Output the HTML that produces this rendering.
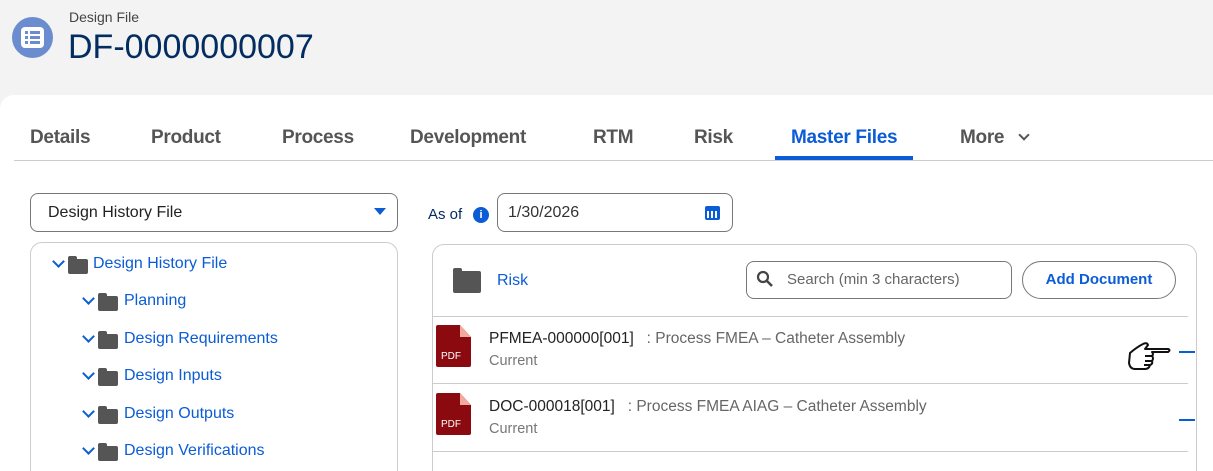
<!DOCTYPE html>
<html style="overflow:hidden;height:471px"><head><meta charset="utf-8"><style>
*{box-sizing:border-box;margin:0;padding:0}
body{width:1213px;height:471px;overflow:hidden;background:#f3f3f3;font-family:"Liberation Sans",sans-serif;position:relative}
.a{position:absolute;white-space:nowrap}
.card{position:absolute;left:0;top:95px;width:1240px;height:376px;background:#fff;border-radius:14px 0 0 0}
.tab{position:absolute;top:127px;font-size:19px;color:#555;font-weight:bold;letter-spacing:-0.3px}
.ti{position:absolute;font-size:16px;color:#0b5cd5}
.chev{position:absolute;width:9px;height:9px;border-right:2px solid #0b5cd5;border-bottom:2px solid #0b5cd5;transform:rotate(45deg)}
.fold{position:absolute;width:20px;height:15px;background:#555;border-radius:2px}
.fold:before{content:"";position:absolute;left:0;top:-3px;width:9px;height:4px;background:#555;border-radius:2px 2px 0 0}
</style></head><body>
<div class="a" style="left:12px;top:17px;width:41px;height:41px;border-radius:50%;background:#6b8ccf"></div>
<div class="a" style="left:21px;top:27px;width:23px;height:21px;border-radius:4px;background:#fff"></div>
<div class="a" style="left:25px;top:31px;width:3px;height:3px;background:#6b8ccf"></div><div class="a" style="left:30px;top:31px;width:10px;height:3px;background:#6b8ccf"></div>
<div class="a" style="left:25px;top:36px;width:3px;height:3px;background:#6b8ccf"></div><div class="a" style="left:30px;top:36px;width:10px;height:3px;background:#6b8ccf"></div>
<div class="a" style="left:25px;top:41px;width:3px;height:3px;background:#6b8ccf"></div><div class="a" style="left:30px;top:41px;width:10px;height:3px;background:#6b8ccf"></div>
<div class="a" style="left:69px;top:9px;font-size:14px;color:#444">Design File</div>
<div class="a" style="left:68px;top:28px;font-size:34px;color:#032d60">DF-0000000007</div>
<div class="card"></div>
<div class="tab" style="left:30px">Details</div>
<div class="tab" style="left:151px">Product</div>
<div class="tab" style="left:282px">Process</div>
<div class="tab" style="left:410px">Development</div>
<div class="tab" style="left:593px">RTM</div>
<div class="tab" style="left:694px">Risk</div>
<div class="tab" style="left:791px;color:#0b5cd5">Master Files</div>
<div class="tab" style="left:960px">More</div>
<div class="chev" style="left:1020px;top:131px;width:8px;height:8px;border-color:#555"></div>
<div class="a" style="left:775px;top:156px;width:138px;height:4px;background:#0b5cd5"></div>
<div class="a" style="left:14px;top:160px;width:1199px;height:1px;background:#ccc"></div>

<div class="a" style="left:30px;top:193px;width:368px;height:39px;border:1px solid #777;border-radius:8px"></div>
<div class="a" style="left:48px;top:204px;font-size:16px;color:#222">Design History File</div>
<div class="a" style="left:374px;top:208px;border-left:6px solid transparent;border-right:6px solid transparent;border-top:7px solid #0b5cd5"></div>
<div class="a" style="left:30px;top:242px;width:368px;height:260px;border:1px solid #ccc;border-radius:12px"></div>
<div class="chev" style="left:54px;top:257px"></div><div class="fold" style="left:68px;top:259px"></div><div class="ti" style="left:93px;top:255px">Design History File</div>
<div class="chev" style="left:84px;top:294px"></div><div class="fold" style="left:98px;top:296px"></div><div class="ti" style="left:124px;top:292px">Planning</div>
<div class="chev" style="left:84px;top:332px"></div><div class="fold" style="left:98px;top:334px"></div><div class="ti" style="left:124px;top:330px">Design Requirements</div>
<div class="chev" style="left:84px;top:369px"></div><div class="fold" style="left:98px;top:371px"></div><div class="ti" style="left:124px;top:367px">Design Inputs</div>
<div class="chev" style="left:84px;top:407px"></div><div class="fold" style="left:98px;top:409px"></div><div class="ti" style="left:124px;top:405px">Design Outputs</div>
<div class="chev" style="left:84px;top:444px"></div><div class="fold" style="left:98px;top:446px"></div><div class="ti" style="left:124px;top:442px">Design Verifications</div>

<div class="a" style="left:428px;top:206px;font-size:15px;color:#032d60">As of</div>
<div class="a" style="left:473px;top:207px;width:16px;height:16px;border-radius:50%;background:#0b5cd5;color:#fff;font-size:11px;font-weight:bold;text-align:center;line-height:16px">i</div>
<div class="a" style="left:497px;top:193px;width:236px;height:39px;border:1px solid #777;border-radius:8px"></div>
<div class="a" style="left:508px;top:204px;font-size:16px;color:#333">1/30/2026</div>
<div class="a" style="left:705px;top:206px;width:15px;height:14px;background:#0b5cd5;border-radius:2px"></div>
<div class="a" style="left:707px;top:211px;width:11px;height:7px;background:repeating-linear-gradient(90deg,#fff 0 2px,#0b5cd5 2px 4px)"></div>

<div class="a" style="left:432px;top:244px;width:765px;height:260px;border:1px solid #ccc;border-radius:12px"></div>
<div class="fold" style="left:453px;top:271px;width:28px;height:22px"></div>
<div class="a" style="left:497px;top:272px;font-size:16px;color:#0b5cd5">Risk</div>
<div class="a" style="left:746px;top:261px;width:266px;height:38px;border:1px solid #777;border-radius:8px"></div>
<svg class="a" style="left:756px;top:270px" width="18" height="18" viewBox="0 0 18 18"><circle cx="7" cy="7" r="5" fill="none" stroke="#444" stroke-width="2.2"/><path d="M11 11l5 5" stroke="#444" stroke-width="2.5"/></svg>
<div class="a" style="left:787px;top:271px;font-size:15px;color:#666">Search (min 3 characters)</div>
<div class="a" style="left:1022px;top:261px;width:154px;height:38px;border:1px solid #777;border-radius:19px;text-align:center;line-height:36px;font-size:15px;font-weight:bold;color:#0b5cd5">Add Document</div>
<div class="a" style="left:433px;top:316px;width:755px;height:1px;background:#ccc"></div>
<div class="a" style="left:433px;top:383px;width:755px;height:1px;background:#ccc"></div>
<div class="a" style="left:433px;top:451px;width:755px;height:1px;background:#ccc"></div>

<svg class="a" style="left:436px;top:325px" width="36" height="42" viewBox="0 0 36 42"><path d="M2 0H24L35 12V40Q35 42 33 42H2Q0 42 0 40V2Q0 0 2 0Z" fill="#8b0a0f"/><path d="M24 0L35 12H24Z" fill="#f3a99b"/><text x="5" y="34" font-size="10" fill="#fff" font-family="Liberation Sans">PDF</text></svg>
<div class="a" style="left:489px;top:330px;font-size:15.5px;color:#222">PFMEA-000000[001] <span style="color:#666">&nbsp; : Process FMEA – Catheter Assembly</span></div>
<div class="a" style="left:489px;top:353px;font-size:14.5px;color:#777">Current</div>
<svg class="a" style="left:436px;top:393px" width="36" height="42" viewBox="0 0 36 42"><path d="M2 0H24L35 12V40Q35 42 33 42H2Q0 42 0 40V2Q0 0 2 0Z" fill="#8b0a0f"/><path d="M24 0L35 12H24Z" fill="#f3a99b"/><text x="5" y="34" font-size="10" fill="#fff" font-family="Liberation Sans">PDF</text></svg>
<div class="a" style="left:489px;top:398px;font-size:15.5px;color:#222">DOC-000018[001] <span style="color:#666">&nbsp; : Process FMEA AIAG – Catheter Assembly</span></div>
<div class="a" style="left:489px;top:421px;font-size:14.5px;color:#777">Current</div>
<div class="a" style="left:1179px;top:351px;width:16px;height:2px;background:#0b5cd5"></div>
<div class="a" style="left:1179px;top:419px;width:16px;height:2px;background:#0b5cd5"></div>
<svg class="a" style="left:1127px;top:341px" width="46" height="32" viewBox="0 0 46 32"><path d="M3 12Q10 6 16 3Q20 1 21 4L18 8H41Q44 9 41 11H25Q27 13 25 15Q27 17 25 20Q26 23 23 24Q22 28 18 28H8Q3 28 2 22Z" fill="#fff" stroke="#111" stroke-width="2" stroke-linejoin="round"/><path d="M18 15H25M18 20H25M17 24H23" stroke="#111" stroke-width="2"/></svg>
</body></html>
